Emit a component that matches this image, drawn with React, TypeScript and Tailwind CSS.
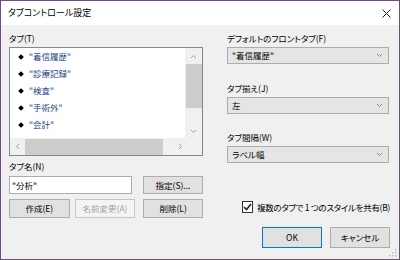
import React from "react";

const font = "[font-family:'Noto_Sans_CJK_JP','Noto_Sans',sans-serif] [font-feature-settings:'palt']";

const tabs = ["着信履歴", "診療記録", "検査", "手術外", "会計", "画像"];

function Chevron() {
  return (
    <svg width="7" height="5" viewBox="0 0 7 5" className="text-[#8a8a8a]">
      <path d="M1 1l2.5 2.5L6 1" fill="none" stroke="currentColor" strokeWidth="1" />
    </svg>
  );
}

function Select({ value }: { value: string }) {
  return (
    <div className="h-[17px] flex items-center justify-between border border-[#acacac] bg-[#e5e5e5] pl-[4px] pr-[5px] text-[8.5px] text-black">
      <span>{value}</span>
      <Chevron />
    </div>
  );
}

function Button({
  label,
  className = "",
  disabled = false,
}: {
  label: string;
  className?: string;
  disabled?: boolean;
}) {
  return (
    <div
      className={
        "flex items-center justify-center border text-[8.5px] " +
        (disabled
          ? "border-[#c6c6c6] bg-[#f4f4f4] text-[#a3a3a3] "
          : "border-[#adadad] bg-[#e1e1e1] text-black ") +
        className
      }
    >
      {label}
    </div>
  );
}

export default function App() {
  return (
    <div
      className={`w-[400px] h-[260px] border border-[#6e4d7d] bg-[#f0f0f0] flex flex-col overflow-hidden ${font}`}
    >
      <div className="h-[24px] shrink-0 bg-white flex items-center justify-between pl-[7px] pr-[8px]">
        <span className="text-[9px] text-black">タブコントロール設定</span>
        <svg width="9" height="9" viewBox="0 0 9 9">
          <path d="M0.5 0.5l8 8M8.5 0.5l-8 8" stroke="#222" strokeWidth="1" />
        </svg>
      </div>

      <div className="flex flex-1 pl-[8px] pt-[6px] relative">
        {/* left column */}
        <div className="w-[194px] flex flex-col">
          <div className="h-[14px] leading-[14px] text-[8.5px] text-black">タブ(T)</div>
          <div className="mt-[2px] h-[109px] border border-[#828790] bg-white relative overflow-hidden">
            <div className="absolute left-0 top-0 w-[175px] h-[90px] overflow-hidden">
              {tabs.map((t) => (
                <div key={t} className="h-[17px] flex items-center text-[8.5px] text-[#263f86]">
                  <span className="ml-[9px] w-[4px] h-[4px] rotate-45 bg-black" />
                  <span className="ml-[6px]">"{t}"</span>
                </div>
              ))}
            </div>
            {/* vertical scrollbar */}
            <div className="absolute right-0 top-0 w-[17px] h-[90px] bg-[#f0f0f0] flex flex-col items-center">
              <svg width="7" height="5" viewBox="0 0 7 5" className="mt-[6px] text-[#a0a0a0]">
                <path d="M1 4l2.5-2.5L6 4" fill="none" stroke="currentColor" />
              </svg>
              <div className="mt-[5px] w-[16px] h-[44px] bg-[#cdcdcd]" />
              <svg width="7" height="5" viewBox="0 0 7 5" className="mt-[21px] text-[#a0a0a0]">
                <path d="M1 1l2.5 2.5L6 1" fill="none" stroke="currentColor" />
              </svg>
            </div>
            {/* horizontal scrollbar */}
            <div className="absolute left-0 bottom-0 w-[175px] h-[17px] bg-[#f0f0f0] flex items-center">
              <svg width="5" height="7" viewBox="0 0 5 7" className="ml-[5px] text-[#a0a0a0]">
                <path d="M4 1L1.5 3.5L4 6" fill="none" stroke="currentColor" />
              </svg>
              <div className="ml-[5px] w-[138px] h-[16px] bg-[#cdcdcd]" />
              <svg width="5" height="7" viewBox="0 0 5 7" className="ml-[15px] text-[#a0a0a0]">
                <path d="M1 1l2.5 2.5L1 6" fill="none" stroke="currentColor" />
              </svg>
            </div>
            <div className="absolute right-0 bottom-0 w-[17px] h-[17px] bg-[#f0f0f0]" />
          </div>

          <div className="mt-[3px] h-[14px] leading-[14px] text-[8.5px] text-black">タブ名(N)</div>
          <div className="mt-[3px] flex gap-[11px]">
            <div className="w-[123px] h-[18px] border border-[#acacac] bg-white flex items-center pl-[2px] text-[8.5px] text-black">
              "分析"
            </div>
            <Button label="指定(S)..." className="w-[60px] h-[18px]" />
          </div>
          <div className="mt-[5px] flex">
            <Button label="作成(E)" className="w-[61px] h-[19px]" />
            <Button label="名前変更(A)" disabled className="ml-[5px] w-[61px] h-[19px]" />
            <Button label="削除(L)" className="ml-[8px] w-[60px] h-[19px]" />
          </div>
        </div>

        {/* right column */}
        <div className="ml-[24px] w-[162px] flex flex-col">
          <div className="h-[14px] leading-[14px] text-[8.5px] text-black">デフォルトのフロントタブ(F)</div>
          <div className="mt-[2px]">
            <Select value={'"着信履歴"'} />
          </div>
          <div className="mt-[17px] h-[14px] leading-[14px] text-[8.5px] text-black">タブ揃え(J)</div>
          <div className="mt-[2px]">
            <Select value="左" />
          </div>
          <div className="mt-[16px] h-[14px] leading-[14px] text-[8.5px] text-black">タブ間隔(W)</div>
          <div className="mt-[2px]">
            <Select value="ラベル幅" />
          </div>
          <div className="mt-[37px] h-[14px] flex items-center pl-[15px] whitespace-nowrap">
            <div className="w-[12px] h-[12px] border border-[#333] bg-white flex items-center justify-center">
              <svg width="9" height="8" viewBox="0 0 9 8">
                <path d="M1 4l2.5 2.5L8 1" fill="none" stroke="#222" strokeWidth="1.6" />
              </svg>
            </div>
            <span className="ml-[4px] text-[8.5px] tracking-[-0.3px] text-black">複数のタブで 1 つのスタイルを共有(B)</span>
          </div>
          <div className="mt-[13px] flex ml-[35px] w-[128px]">
            <div className="w-[60px] h-[21px] border border-[#0078d7] bg-[#e1e1e1] flex items-center justify-center text-[8.5px] text-black">
              OK
            </div>
            <Button label="キャンセル" className="ml-[8px] w-[60px] h-[21px]" />
          </div>
        </div>

        {/* size grip */}
        <svg width="8" height="8" viewBox="0 0 8 8" className="absolute right-[2px] bottom-[2px]">
          <rect x="6" y="0" width="1.5" height="1.5" fill="#bdbdbd" />
          <rect x="3" y="3" width="1.5" height="1.5" fill="#bdbdbd" />
          <rect x="6" y="3" width="1.5" height="1.5" fill="#bdbdbd" />
          <rect x="0" y="6" width="1.5" height="1.5" fill="#bdbdbd" />
          <rect x="3" y="6" width="1.5" height="1.5" fill="#bdbdbd" />
          <rect x="6" y="6" width="1.5" height="1.5" fill="#bdbdbd" />
        </svg>
      </div>
    </div>
  );
}
